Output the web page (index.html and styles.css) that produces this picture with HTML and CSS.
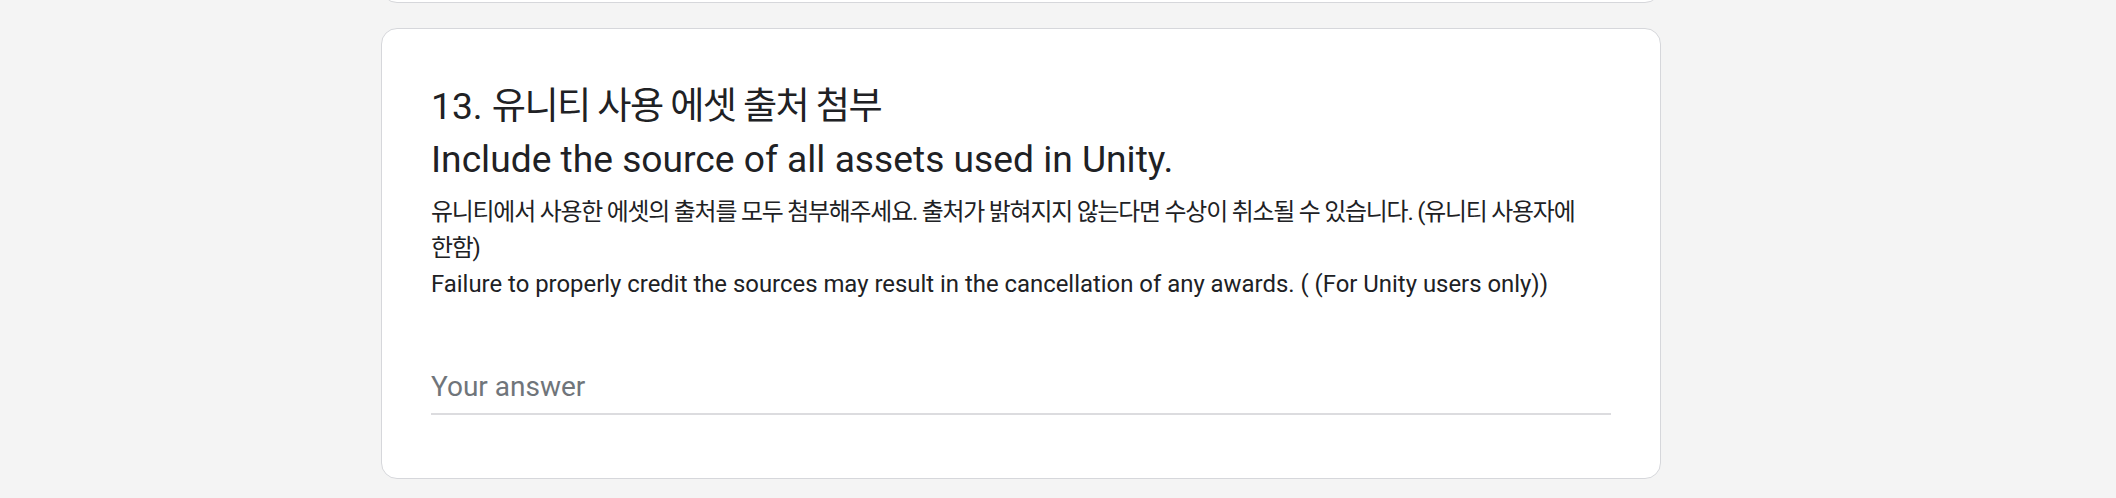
FILE: index.html
```html
<!DOCTYPE html>
<html lang="ko">
<head>
<meta charset="utf-8">
<title>Form question</title>
<link rel="stylesheet" href="styles.css">
</head>
<body>
<div class="page">
  <div class="card card-prev"></div>
  <div class="card question">
    <div class="title">
      <div class="title-line">13. <span class="ko ko-title">유니티 사용 에셋 출처 첨부</span></div>
      <div class="title-line">Include the source of all assets used in Unity.</div>
    </div>
    <div class="desc">
      <div class="ko">유니티에서 사용한 에셋의 출처를 모두 첨부해주세요. 출처가 밝혀지지 않는다면 수상이 취소될 수 있습니다. (유니티 사용자에 한함)</div>
      <div>Failure to properly credit the sources may result in the cancellation of any awards. ( (For Unity users only))</div>
    </div>
    <div class="answer">
      <div class="answer-text">Your answer</div>
    </div>
  </div>
</div>
</body>
</html>
```

FILE: styles.css
```css
html, body {
  margin: 0;
  padding: 0;
  background: #f4f4f4;
}
body {
  font-family: Roboto, "Noto Sans CJK KR", sans-serif;
  color: #202124;
  overflow: hidden;
}
.page {
  padding-left: 381px;
  display: flex;
  flex-direction: column;
}
.card {
  box-sizing: border-box;
  width: 1280px;
  background: #ffffff;
  border: 1px solid #d6d7db;
  border-radius: 16px;
}
.card-prev {
  height: 100px;
  margin-top: -97px;
  margin-bottom: 25px;
}
.question {
  padding: 51px 49px 63px;
  display: flex;
  flex-direction: column;
}
.ko {
  letter-spacing: -0.05em;
  word-break: keep-all;
}
.ko-title {
  letter-spacing: -0.043em;
}
.title {
  font-size: 37.2px;
  line-height: 53px;
  font-weight: 400;
}
.desc {
  margin-top: 8px;
  font-size: 23.9px;
  line-height: 36px;
}
.answer {
  margin-top: 65px;
  padding-bottom: 6px;
  border-bottom: 2px solid #dcdcdf;
}
.answer-text {
  font-size: 28px;
  line-height: 40px;
  color: #70757a;
}
```
